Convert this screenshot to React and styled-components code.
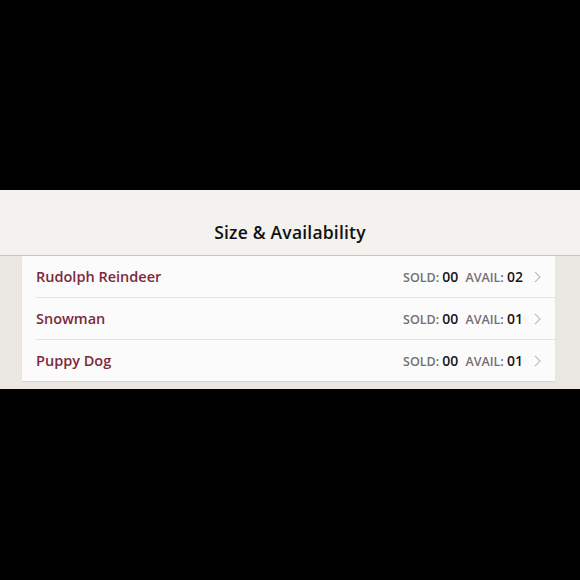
import React from "react";
import styled, { createGlobalStyle } from "styled-components";

const GlobalStyle = createGlobalStyle`
  html, body {
    margin: 0;
    padding: 0;
    background: #000;
  }
  body {
    font-family: "Open Sans", "Liberation Sans", sans-serif;
  }
`;

const items = [
  { name: "Rudolph Reindeer", sold: "00", avail: "02" },
  { name: "Snowman", sold: "00", avail: "01" },
  { name: "Puppy Dog", sold: "00", avail: "01" },
];

const Page = () => (
  <>
    <GlobalStyle />
    <Screen>
      <Panel>
        <Header>
          <Title>Size &amp; Availability</Title>
        </Header>
        <List>
          {items.map((item) => (
            <Row key={item.name}>
              <Name>{item.name}</Name>
              <Stats>
                <Label>
                  SOLD: <Count>{item.sold}</Count>
                </Label>
                <Label>
                  AVAIL: <Count>{item.avail}</Count>
                </Label>
                <Chevron viewBox="0 0 8 14">
                  <polyline points="1,1 7,7 1,13" />
                </Chevron>
              </Stats>
            </Row>
          ))}
        </List>
      </Panel>
    </Screen>
  </>
);

export default Page;

const Screen = styled.div`
  height: 580px;
  padding-top: 190px;
  box-sizing: border-box;
`;

const Panel = styled.section`
  background: #ebe8e3;
  padding-bottom: 8px;
`;

const Header = styled.header`
  height: 66px;
  background: #f4f2ef;
  border-bottom: 1px solid #c9c6c2;
  display: flex;
  align-items: center;
  justify-content: center;
  padding-top: 19px;
  box-sizing: border-box;
`;

const Title = styled.h1`
  margin: 0;
  font-size: 17.5px;
  font-weight: 600;
  color: #111;
  letter-spacing: 0.2px;
`;

const List = styled.ul`
  list-style: none;
  margin: 0 0 0 22px;
  padding: 0;
  width: 533px;
  background: #fcfbfc;
  box-shadow: 0 1px 1px rgba(0, 0, 0, 0.08);
`;

const Row = styled.li`
  height: 41px;
  margin-left: 14px;
  padding-right: 14px;
  display: flex;
  align-items: center;
  justify-content: space-between;
  & + & {
    border-top: 1px solid #e6e3e4;
  }
`;

const Name = styled.span`
  font-size: 14.5px;
  font-weight: 600;
  color: #7b2a3b;
`;

const Stats = styled.div`
  display: flex;
  align-items: center;
  gap: 7px;
`;

const Label = styled.span`
  font-size: 12.5px;
  font-weight: 600;
  color: #727071;
`;

const Count = styled.span`
  font-size: 14px;
  color: #161616;
`;

const Chevron = styled.svg`
  width: 7px;
  height: 12px;
  margin-left: 4px;
  fill: none;
  stroke: #bdbbbc;
  stroke-width: 1.3;
`;
